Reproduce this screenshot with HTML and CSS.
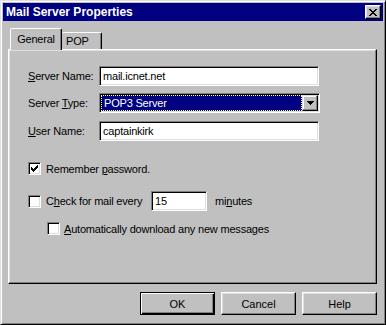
FILE: index.html
```html
<!DOCTYPE html>
<html lang="en">
<head>
    <meta charset="UTF-8">
    <title>Mail Server Properties</title>
    <link rel="stylesheet" href="styles.css">
</head>
<body>
    <div class="window">
        <div class="titlebar">
            <span class="title">Mail Server Properties</span>
            <button class="close" type="button">
                <svg width="8" height="7" viewBox="0 0 8 7" shape-rendering="crispEdges">
                    <path fill="#000" d="M0 0h2v1h-2zM6 0h2v1h-2zM1 1h2v1h-2zM5 1h2v1h-2zM2 2h4v1h-4zM3 3h2v1h-2zM2 4h4v1h-4zM1 5h2v1h-2zM5 5h2v1h-2zM0 6h2v1h-2zM6 6h2v1h-2z"/>
                </svg>
            </button>
        </div>

        <div class="content">
            <div class="tabs">
                <div class="tab tab-active">General</div>
                <div class="tab tab-pop">POP</div>
            </div>

            <div class="panel">
                <div class="field">
                    <span class="field-label"><u>S</u>erver Name:</span>
                    <div class="edit">mail.icnet.net</div>
                </div>
                <div class="field field-gap">
                    <span class="field-label">Server <u>T</u>ype:</span>
                    <div class="combo">
                        <div class="combo-value">POP3 Server</div>
                        <div class="combo-button">
                            <svg width="7" height="4" viewBox="0 0 7 4" shape-rendering="crispEdges">
                                <path fill="#000" d="M0 0h7v1h-7zM1 1h5v1h-5zM2 2h3v1h-3zM3 3h1v1h-1z"/>
                            </svg>
                        </div>
                    </div>
                </div>
                <div class="field field-gap-wide">
                    <span class="field-label"><u>U</u>ser Name:</span>
                    <div class="edit">captainkirk</div>
                </div>

                <div class="option option-remember">
                    <div class="check">
                        <svg width="7" height="7" viewBox="0 0 7 7" shape-rendering="crispEdges">
                            <path fill="#000" d="M6 0h1v1h-1zM5 1h2v1h-2zM0 2h1v1h-1zM4 2h3v1h-3zM0 3h2v1h-2zM3 3h3v1h-3zM0 4h5v1h-5zM1 5h3v1h-3zM2 6h1v1h-1z"/>
                        </svg>
                    </div>
                    <span>Remember <u>p</u>assword.</span>
                </div>

                <div class="option option-every">
                    <div class="check"></div>
                    <span class="every-label">C<u>h</u>eck for mail every</span>
                    <div class="edit edit-small">15</div>
                    <span class="minutes">mi<u>n</u>utes</span>
                </div>

                <div class="option option-auto">
                    <div class="check"></div>
                    <span><u>A</u>utomatically download any new messages</span>
                </div>
            </div>

            <div class="buttons">
                <button class="btn btn-default" type="button">OK</button>
                <button class="btn" type="button">Cancel</button>
                <button class="btn" type="button">Help</button>
            </div>
        </div>
    </div>
</body>
</html>
```

FILE: styles.css
```css
* {
    box-sizing: border-box;
}

body {
    margin: 0;
    background: #c0c0c0;
    font-family: "Liberation Sans", Arial, sans-serif;
    font-size: 11px;
    letter-spacing: -0.2px;
    color: #000;
}

/* window frame */
.window {
    width: 386px;
    height: 325px;
    background: #c0c0c0;
    border: 1px solid;
    border-color: #dfdfdf #000 #000 #dfdfdf;
    box-shadow: inset 1px 1px #fff, inset -1px -1px #808080;
    padding: 2px;
}

.titlebar {
    height: 18px;
    background: #000080;
    color: #fff;
    display: flex;
    align-items: center;
    padding: 0 2px 0 3px;
}

.title {
    flex: 1;
    font-weight: bold;
    font-size: 12px;
    letter-spacing: 0;
}

.close {
    width: 16px;
    height: 14px;
    padding: 0;
    background: #c0c0c0;
    border: 1px solid;
    border-color: #fff #000 #000 #fff;
    box-shadow: inset -1px -1px #808080, inset 1px 1px #dfdfdf;
    display: flex;
    align-items: center;
    justify-content: center;
}

.content {
    padding: 7px 6px 0 5px;
}

/* tabs */
.tabs {
    display: flex;
    align-items: flex-end;
    height: 21px;
    padding-left: 2px;
}

.tab {
    background: #c0c0c0;
    border-top: 1px solid #fff;
    border-left: 1px solid #fff;
    border-right: 1px solid #000;
    box-shadow: inset -1px 0 #808080;
    border-radius: 2px 2px 0 0;
    display: flex;
    align-items: center;
}

.tab-active {
    width: 52px;
    height: 22px;
    margin-bottom: -1px;
    justify-content: center;
    position: relative;
    z-index: 1;
    padding-bottom: 1px;
}

.tab-pop {
    width: 40px;
    height: 17px;
    padding-left: 4px;
    border-left: none;
}

.panel {
    height: 235px;
    border: 1px solid;
    border-color: #fff #000 #000 #fff;
    box-shadow: inset -1px -1px #808080, inset 1px 1px #dfdfdf;
    padding: 16px 0 0 19px;
    white-space: nowrap;
}

/* fields */
.field {
    display: flex;
    align-items: center;
    height: 20px;
}

.field-gap {
    margin-top: 7px;
}

.field-gap-wide {
    margin-top: 8px;
}

.field-label {
    width: 71px;
}

.edit {
    width: 220px;
    height: 20px;
    background: #fff;
    border: 1px solid;
    border-color: #808080 #fff #fff #808080;
    box-shadow: inset 1px 1px #000, inset -1px -1px #dfdfdf;
    padding: 0 3px;
    display: flex;
    align-items: center;
}

.edit-small {
    width: 56px;
}

.combo {
    width: 221px;
    height: 20px;
    background: #fff;
    border: 1px solid;
    border-color: #808080 #fff #fff #808080;
    box-shadow: inset 1px 1px #000, inset -1px -1px #dfdfdf;
    padding: 1px;
    display: flex;
}

.combo-value {
    flex: 1;
    background: #000080;
    color: #fff;
    border: 1px dotted #ffff90;
    padding-left: 2px;
    display: flex;
    align-items: center;
}

.combo-button {
    width: 16px;
    background: #c0c0c0;
    border: 1px solid;
    border-color: #dfdfdf #000 #000 #dfdfdf;
    box-shadow: inset -1px -1px #808080, inset 1px 1px #fff;
    display: flex;
    align-items: center;
    justify-content: center;
}

/* check options */
.option {
    display: flex;
    align-items: center;
    gap: 5px;
}

.check {
    width: 13px;
    height: 13px;
    background: #fff;
    border: 1px solid;
    border-color: #808080 #fff #fff #808080;
    box-shadow: inset 1px 1px #000, inset -1px -1px #dfdfdf;
    display: flex;
    align-items: center;
    justify-content: center;
    flex-shrink: 0;
}

.option-remember {
    margin-top: 21px;
    height: 13px;
}

.option-every {
    margin-top: 16px;
    height: 20px;
}

.every-label {
    width: 100px;
    flex-shrink: 0;
}

.minutes {
    margin-left: 3px;
}

.option-auto {
    margin-top: 11px;
    height: 13px;
    padding-left: 19px;
    gap: 4px;
}

/* buttons */
.buttons {
    display: flex;
    justify-content: flex-end;
    gap: 6px;
    margin-top: 8px;
}

.btn {
    width: 75px;
    height: 23px;
    padding: 0;
    font: inherit;
    color: #000;
    background: #c0c0c0;
    border: 1px solid;
    border-color: #fff #000 #000 #fff;
    box-shadow: inset -1px -1px #808080, inset 1px 1px #dfdfdf;
}

.btn-default {
    border-color: #000;
    box-shadow: inset 1px 1px #fff, inset -1px -1px #000, inset -2px -2px #808080;
}
```
